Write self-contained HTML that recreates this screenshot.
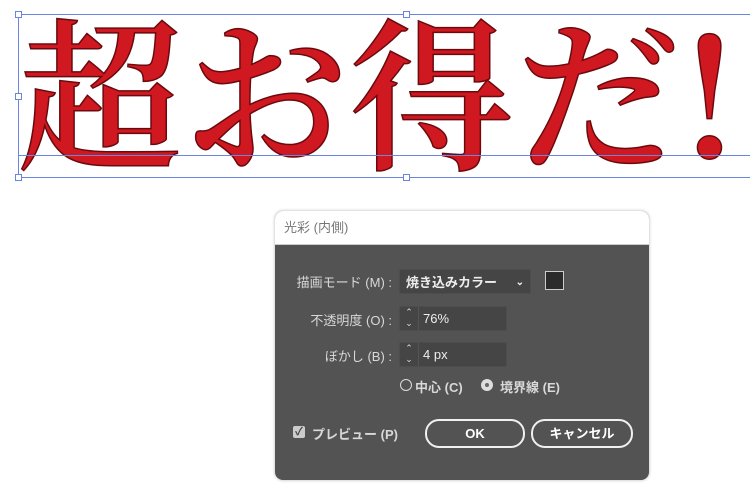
<!DOCTYPE html>
<html><head><meta charset="utf-8"><style>
body{margin:0;width:750px;height:494px;background:#fff;position:relative;overflow:hidden;font-family:"Liberation Sans","Noto Sans CJK JP",sans-serif}
.big{position:absolute;left:18px;top:-14px;font-family:"Noto Serif CJK SC","Noto Sans CJK JP",serif;font-weight:600;font-size:164px;line-height:200px;color:#d01820;-webkit-text-stroke:1.5px #6a0a0e;letter-spacing:2px;white-space:nowrap}
.ln{position:absolute;background:#6b86e0}
.hd{position:absolute;width:5px;height:5px;border:1px solid #6b86e0;background:#fff}
.dlg{position:absolute;left:275px;top:211px;width:374px;height:269px;border-radius:8px;background:#535353;overflow:hidden;box-shadow:0 0 3px rgba(0,0,0,.3)}
.tt{height:33px;background:#fff;color:#777;font-size:13px;line-height:33px;padding-left:9px;border-bottom:1px solid #ccc}
.a{position:absolute;color:#d8d8d8;font-size:13px;white-space:nowrap}
.lb{text-align:right;width:117px;left:0}
.fld{position:absolute;background:#454545;border:1px solid #4d4d4d;border-radius:2px;color:#eee;font-size:13px}
.btn{position:absolute;border:2px solid #f0f0f0;border-radius:14px;color:#fff;font-size:13px;font-weight:bold;text-align:center;line-height:25px}
</style></head><body>
<div class="big">超お得だ!</div>
<div class="ln" style="left:18px;top:14px;width:732px;height:1px"></div>
<div class="ln" style="left:18px;top:177px;width:732px;height:1px"></div>
<div class="ln" style="left:18px;top:155px;width:732px;height:1px"></div>
<div class="ln" style="left:18px;top:14px;width:1px;height:163px"></div>
<div class="hd" style="left:15px;top:11px"></div><div class="hd" style="left:403px;top:11px"></div>
<div class="hd" style="left:15px;top:93px"></div>
<div class="hd" style="left:15px;top:174px"></div><div class="hd" style="left:403px;top:174px"></div>
<div class="dlg">
<div class="tt">光彩 (内側)</div>
<div class="a lb" style="top:61px">描画モード (M) :</div>
<div class="fld" style="left:124px;top:58px;width:132px;height:25px;line-height:25px;font-weight:bold;padding-left:6px;box-sizing:border-box">焼き込みカラー<span style="position:absolute;right:6px;font-size:10px">&#8964;</span></div>
<div style="position:absolute;left:270px;top:60px;width:17px;height:17px;border:1px solid #ccc;background:#2b2b2b"></div>
<div class="a lb" style="top:99px">不透明度 (O) :</div>
<div class="fld" style="left:124px;top:95px;width:106px;height:23px"><span style="position:absolute;left:0;top:0;width:18px;height:23px;border-right:1px solid #555;font-size:9px;line-height:11px;text-align:center;color:#ddd">&#8963;<br>&#8964;</span><span style="position:absolute;left:23px;line-height:23px">76%</span></div>
<div class="a lb" style="top:135px">ぼかし (B) :</div>
<div class="fld" style="left:124px;top:131px;width:106px;height:23px"><span style="position:absolute;left:0;top:0;width:18px;height:23px;border-right:1px solid #555;font-size:9px;line-height:11px;text-align:center;color:#ddd">&#8963;<br>&#8964;</span><span style="position:absolute;left:23px;line-height:23px">4 px</span></div>
<div style="position:absolute;left:125px;top:168px;width:10px;height:10px;border:1.5px solid #ddd;border-radius:50%"></div>
<div class="a" style="left:140px;top:166px;font-weight:bold">中心 (C)</div>
<div style="position:absolute;left:206px;top:168px;width:12px;height:12px;background:#ddd;border-radius:50%"><div style="margin:4px;width:4px;height:4px;background:#666;border-radius:50%"></div></div>
<div class="a" style="left:225px;top:166px;font-weight:bold">境界線 (E)</div>
<div style="position:absolute;left:18px;top:215px;width:12px;height:12px;background:#ccc;border-radius:2px;color:#444;font-size:11px;line-height:12px;text-align:center;font-weight:bold">✓</div>
<div class="a" style="left:37px;top:213px;font-weight:bold">プレビュー (P)</div>
<div class="btn" style="left:150px;top:208px;width:96px;height:25px">OK</div>
<div class="btn" style="left:256px;top:208px;width:98px;height:25px">キャンセル</div>
</div>
</body></html>
